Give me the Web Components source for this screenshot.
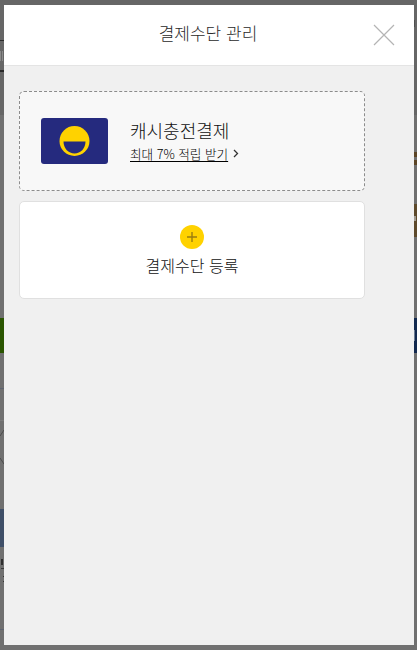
<!DOCTYPE html>
<html lang="ko">
<head>
<meta charset="utf-8">
<title>결제수단 관리</title>
<style>
  html, body { margin: 0; height: 100%; overflow: hidden; background: #6e6e6e; }
  body { font-family: "Noto Sans CJK KR", "Noto Sans", sans-serif; }
</style>
</head>
<body>
<page-backdrop>
  <payment-dialog heading="결제수단 관리">
    <cash-method-card title-text="캐시충전결제" link-text="최대 7% 적립 받기"></cash-method-card>
    <add-method-card label="결제수단 등록"></add-method-card>
  </payment-dialog>
</page-backdrop>

<script>
// bits of the page behind the dialog that show at its edges: [left, top, width, height, colour]
const SCRAPS = [
  [0, 5, 4, 110, "#666"], [414, 5, 3, 110, "#666"],
  [0, 40, 4, 1, "#2a2a2a"], [0, 70, 4, 2, "#2a2a2a"],
  [0, 51, 1, 10, "#8a8a8a"], [2, 51, 1, 10, "#8a8a8a"],
  [0, 318, 4, 35, "#2a5500"], [0, 388, 4, 1, "#5e6470"],
  [0, 420, 4, 1, "#7c7c7c"],
  [0, 509, 4, 38, "#3f4f68"],
  [1, 559, 2, 6, "#2e2e2e"], [1, 568, 3, 1, "#3a3a3a"], [3, 576, 1, 1, "#333"], [3, 581, 1, 1, "#333"],
  [0, 629, 4, 1, "#5e6470"],
  [414, 20, 1, 7, "#4e4e4e"],
  [414, 152, 3, 5, "#5c4526"], [414, 160, 3, 5, "#5c4526"],
  [414, 204, 3, 33, "#5e4a2c"], [414, 216, 2, 5, "#a09a90"],
  [414, 318, 3, 35, "#12294f"], [414, 330, 1, 11, "#6c7c94"],
];

class PageBackdrop extends HTMLElement {
  constructor() {
    super();
    const scraps = SCRAPS.map(([l, t, w, h, c]) =>
      `<div class="scrap" style="left:${l}px;top:${t}px;width:${w}px;height:${h}px;background:${c}"></div>`).join("");
    this.attachShadow({mode: "open"}).innerHTML = `
      <style>
        :host { display: block; position: relative; width: 417px; height: 650px; overflow: hidden; background: #707070; }
        .frame { box-sizing: border-box; height: 100%; padding: 5px 3px 5px 4px; position: relative; }
        .scrap { position: absolute; }
        .top { position: absolute; left: 0; top: 0; width: 100%; height: 5px; background: #666; }
        svg { position: absolute; left: 0; top: 430px; }
      </style>
      <div class="top"></div>
      ${scraps}
      <svg width="4" height="36" viewBox="0 0 4 36"><path d="M4 0L0 6M0 28L4 34" stroke="#4c4c4c" stroke-width="1" fill="none"/></svg>
      <div class="frame"><slot></slot></div>
    `;
  }
}

class PaymentDialog extends HTMLElement {
  constructor() {
    super();
    const heading = this.getAttribute("heading");
    this.attachShadow({mode: "open"}).innerHTML = `
      <style>
        :host { display: flex; flex-direction: column; position: relative; height: 640px; background: #f0f0f0; }
        header { box-sizing: border-box; height: 61px; flex: none; display: flex; align-items: center; justify-content: center;
          background: #fff; border-bottom: 1px solid #e4e4e4; position: relative; }
        h1 { margin: 0; font-size: 17px; font-weight: 300; line-height: 24px; color: #2a2a2a; position: relative; top: -2px; left: -1px; }
        svg { position: absolute; left: 369px; top: 19px; }
        .body { display: flex; flex-direction: column; gap: 10px; padding: 25px 49px 0 15px; }
      </style>
      <header>
        <h1>${heading}</h1>
        <svg width="22" height="22" viewBox="0 0 22 22"><path d="M1 1L21 21M21 1L1 21" stroke="#b4b4b4" stroke-width="1.2" fill="none"/></svg>
      </header>
      <div class="body"><slot></slot></div>
    `;
  }
}

class CashMethodCard extends HTMLElement {
  constructor() {
    super();
    const title = this.getAttribute("title-text");
    const link = this.getAttribute("link-text");
    this.attachShadow({mode: "open"}).innerHTML = `
      <style>
        :host { display: block; }
        .card { box-sizing: border-box; height: 100px; display: flex; align-items: center; gap: 22px; padding: 0 0 0 21px;
          background: #f8f8f8; border: 1px dashed #8c8c8c; border-radius: 5px; }
        .logo { width: 67px; height: 46px; flex: none; display: block; }
        .text { display: flex; flex-direction: column; padding-bottom: 3px; }
        .title { font-size: 18px; font-weight: 300; line-height: 27px; color: #111; }
        .more { display: flex; align-items: center; gap: 5px; font-size: 12.6px; font-weight: 300; line-height: 19px; color: #000; }
        .more span { text-decoration: underline; text-decoration-thickness: 1px; text-underline-offset: 2px; }
        .more svg { display: block; margin-top: 1px; }
      </style>
      <div class="card">
        <svg class="logo" viewBox="0 0 67 46">
          <rect width="67" height="46" rx="3" fill="#252a7e"/>
          <circle cx="33.5" cy="23" r="15" fill="#ffd200"/>
          <path d="M22.5 23.5H44.5C44.5 30.5 39.5 35.5 33.5 35.5S22.5 30.5 22.5 23.5Z" fill="#252a7e"/>
        </svg>
        <div class="text">
          <div class="title">${title}</div>
          <div class="more"><span>${link}</span>
            <svg width="6" height="9" viewBox="0 0 6 9"><path d="M1 1L4.5 4.5L1 8" stroke="#333" stroke-width="1.3" fill="none"/></svg>
          </div>
        </div>
      </div>
    `;
  }
}

class AddMethodCard extends HTMLElement {
  constructor() {
    super();
    const label = this.getAttribute("label");
    this.attachShadow({mode: "open"}).innerHTML = `
      <style>
        :host { display: block; }
        .card { box-sizing: border-box; height: 98px; display: flex; flex-direction: column; align-items: center; padding-top: 23px;
          background: #fff; border: 1px solid #e0e0e0; border-radius: 5px; }
        svg { display: block; }
        .label { margin-top: 5px; font-size: 16px; font-weight: 300; line-height: 22px; color: #111; }
      </style>
      <div class="card">
        <svg width="24" height="24" viewBox="0 0 24 24">
          <circle cx="12" cy="12" r="12" fill="#ffd200"/>
          <path d="M7 12H17M12 7V17" stroke="#9a7d10" stroke-width="1.4"/>
        </svg>
        <div class="label">${label}</div>
      </div>
    `;
  }
}

customElements.define("page-backdrop", PageBackdrop);
customElements.define("payment-dialog", PaymentDialog);
customElements.define("cash-method-card", CashMethodCard);
customElements.define("add-method-card", AddMethodCard);
</script>
</body>
</html>
